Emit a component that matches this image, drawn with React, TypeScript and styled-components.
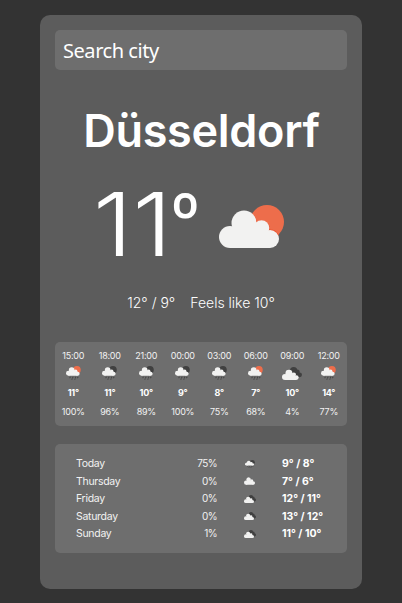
import React from "react";
import styled, { createGlobalStyle } from "styled-components";

const Global = createGlobalStyle`
  *, *::before, *::after { box-sizing: border-box; }
  body {
    margin: 0;
    background: #333;
    color: #fff;
    font-family: Inter, "Liberation Sans", sans-serif;
  }
`;

const Page = styled.main`
  height: 603px;
  padding: 15px 40px 14px;
  overflow: hidden;
`;

const Card = styled.section`
  display: flex;
  flex-direction: column;
  height: 574px;
  padding: 15px;
  border-radius: 10px;
  background: #5c5c5c;
`;

const Search = styled.input`
  width: 100%;
  height: 40px;
  padding: 0 8px;
  border: 0;
  border-radius: 5px;
  outline: 0;
  background: #6e6e6e;
  color: #fff;
  font: 400 20px "Noto Sans", sans-serif;
  letter-spacing: -0.45px;
  &::placeholder { color: #fff; opacity: 1; }
`;

const City = styled.h1`
  margin: 35px 0 0 1px;
  height: 52px;
  line-height: 52px;
  text-align: center;
  white-space: nowrap;
  font-size: 45px;
  font-weight: 600;
  letter-spacing: -0.3px;
`;

const Current = styled.div`
  display: flex;
  height: 100px;
  margin-top: 18px;
  padding-left: 38px;
`;

const Temperature = styled.div`
  display: flex;
  width: 126px;
  font-size: 88px;
  line-height: 99px;
  font-weight: 300;
`;

const Digits = styled.span`
  width: 77px;
  letter-spacing: 0;
  transform: scaleX(1.14);
  transform-origin: left;
`;

const Degree = styled.span`
  font-family: Roboto, sans-serif;
  font-weight: 500;
  font-size: 67px;
  line-height: 86px;
`;

const MainIcon = styled.div`
  padding-top: 30px;
  svg { display: block; }
`;

const Summary = styled.div`
  display: flex;
  justify-content: center;
  gap: 15px;
  height: 20px;
  margin-top: 18px;
  line-height: 20px;
  font-size: 14px;
  font-weight: 300;
  white-space: pre;
`;

const Hourly = styled.div`
  display: grid;
  grid-template-columns: repeat(8, 1fr);
  height: 84px;
  margin-top: 29px;
  border-radius: 5px;
  background: #6e6e6e;
`;

const Hour = styled.div`
  display: grid;
  grid-template-rows: 12px 22px 18px 20px;
  padding-top: 8px;
  justify-items: center;
  align-items: center;
  font-size: 9px;
  line-height: 12px;
  color: #f2f2f2;
  letter-spacing: -0.25px;
  svg { display: block; }
`;

const Strong = styled.b`
  font-weight: 700;
  color: #fff;
`;

const Daily = styled.div`
  height: 109px;
  margin-top: 18px;
  padding: 11px 21px 0;
  border-radius: 5px;
  background: #6e6e6e;
`;

const Day = styled.div`
  display: grid;
  grid-template-columns: 100px 41px 65px 44px;
  height: 17.5px;
  align-items: center;
  font-size: 10.5px;
  line-height: 17px;
  letter-spacing: -0.3px;
  white-space: nowrap;
  color: #f2f2f2;
`;

const Range = styled(Strong)`
  letter-spacing: 0;
`;

const Chance = styled.span`
  text-align: right;
  font-size: 10px;
  letter-spacing: -0.6px;
`;

const IconCell = styled.span`
  display: flex;
  justify-content: center;
`;

type Kind = "sun" | "cloud" | "clouds" | "sunrain" | "nightrain";

function Cloud() {
  return (
    <>
      <circle cx="11" cy="32" r="11" />
      <circle cx="25" cy="18" r="12.5" />
      <circle cx="42.5" cy="23" r="7.8" />
      <circle cx="51" cy="34" r="9" />
      <path d="M11 43V25h4l10-8 13 4 12 9 1 13Z" />
    </>
  );
}

function Weather({ kind, width, height }: { kind: Kind; width: number; height: number }) {
  const sunny = kind === "sun" || kind === "sunrain";
  const night = kind === "nightrain";
  const rain = kind === "sunrain" || night;
  const box = rain ? "0 0 66 62" : kind === "clouds" ? "0 -5 72 48" : kind === "cloud" ? "0 4 60 40" : "0 0 66 44";
  return (
    <svg width={width} height={height} viewBox={box} preserveAspectRatio="none">
      {(sunny || night) && <circle cx="48" cy="17" r="17" fill={sunny ? "#ed6d4b" : "#404040"} />}
      {kind === "clouds" && (
        <g fill="#404040">
          <circle cx="42" cy="8" r="13" />
          <circle cx="55" cy="13" r="9" />
          <circle cx="63" cy="24" r="9" />
          <path d="M30 10h28l8 22H40Z" />
        </g>
      )}
      {kind === "sun" && (
        <path
          d="M34 12a12.5 12.5 0 0 1 4 5 8 8 0 0 1 12.5 6l.3 2a9 9 0 0 1 8.7 5l-8 4-20-10Z"
          fill="#eb5835"
          stroke="#eb5835"
        />
      )}
      <g fill="#f2f2f1">
        <Cloud />
      </g>
      {rain && (
        <path
          d="m19 49-2 3m14-3-2 3m14-3-2 3m12-3-2 3m-24 5-1 2m14-2-1 2"
          stroke="#444"
          strokeWidth="4.5"
          strokeLinecap="round"
        />
      )}
    </svg>
  );
}

const hours: [string, Kind, string, string][] = [
  ["15:00", "sunrain", "11°", "100%"],
  ["18:00", "nightrain", "11°", "96%"],
  ["21:00", "nightrain", "10°", "89%"],
  ["00:00", "nightrain", "9°", "100%"],
  ["03:00", "nightrain", "8°", "75%"],
  ["06:00", "sunrain", "7°", "68%"],
  ["09:00", "clouds", "10°", "4%"],
  ["12:00", "sunrain", "14°", "77%"],
];

const days: [string, string, Kind, string][] = [
  ["Today", "75%", "nightrain", "9° / 8°"],
  ["Thursday", "0%", "cloud", "7° / 6°"],
  ["Friday", "0%", "clouds", "12° / 11°"],
  ["Saturday", "0%", "clouds", "13° / 12°"],
  ["Sunday", "1%", "clouds", "11° / 10°"],
];

export default function App() {
  return (
    <Page>
      <Global />
      <Card>
        <Search placeholder="Search city" aria-label="Search city" />
        <City>Düsseldorf</City>
        <Current>
          <Temperature>
            <Digits>11</Digits>
            <Degree>º</Degree>
          </Temperature>
          <MainIcon>
            <Weather kind="sun" width={66} height={44} />
          </MainIcon>
        </Current>
        <Summary>
          <span>12° / 9°</span>
          <span>Feels like 10°</span>
        </Summary>
        <Hourly>
          {hours.map(([time, kind, temp, chance]) => (
            <Hour key={time}>
              <span>{time}</span>
              <Weather kind={kind} width={kind === "clouds" ? 20 : 15} height={kind === "clouds" ? 13 : 14} />
              <Strong>{temp}</Strong>
              <span>{chance}</span>
            </Hour>
          ))}
        </Hourly>
        <Daily>
          {days.map(([name, chance, kind, range]) => (
            <Day key={name}>
              <span>{name}</span>
              <Chance>{chance}</Chance>
              <IconCell>
                <Weather kind={kind} width={kind === "nightrain" ? 10 : kind === "cloud" ? 11 : 12} height={8} />
              </IconCell>
              <Range>{range}</Range>
            </Day>
          ))}
        </Daily>
      </Card>
    </Page>
  );
}
